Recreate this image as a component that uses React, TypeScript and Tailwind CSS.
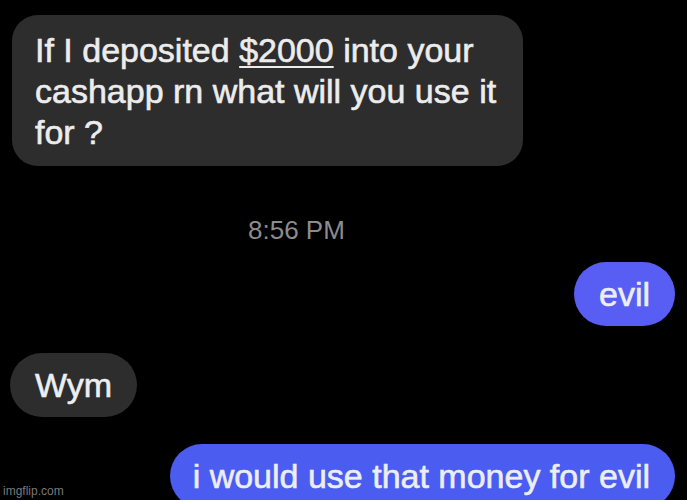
const font = "font-['Liberation_Sans',Arial,sans-serif]";
// the screenshot text reads a touch heavier than Liberation's regular cut
const heavy = "[-webkit-text-stroke:0.6px_currentColor]";

function Bubble({
  children,
  tone,
  className = "",
}: {
  children: React.ReactNode;
  tone: "gray" | "blue" | "blueDeep";
  className?: string;
}) {
  const bg =
    tone === "gray" ? "bg-[#2d2d2e]" : tone === "blue" ? "bg-[#585ef4]" : "bg-[#4b5cf1]";
  return (
    <div
      className={`${bg} ${heavy} h-[64px] shrink-0 rounded-full px-[25px] pt-[12px] pb-[11px] text-[34px] leading-[41px] text-[#eceef2] whitespace-nowrap ${className}`}
    >
      {children}
    </div>
  );
}

export default function App() {
  return (
    <div className={`relative flex h-[500px] w-[687px] flex-col overflow-hidden bg-black ${font}`}>
      <div
        className={`mt-[15px] ml-[12px] w-[511px] rounded-[26px] bg-[#2d2d2e] pt-[15px] pb-[13px] pl-[23px] pr-[12px] text-[34px] leading-[41px] text-[#ececec] ${heavy}`}
      >
        If I deposited{" "}
        <span className="underline decoration-[2px] underline-offset-[4px]">$2000</span> into your
        <br />
        cashapp rn what will you use it
        <br />
        for ?
      </div>

      <div className="mt-[49px] pl-[248px] text-[26px] leading-[30px] text-[#8c8c8c]">8:56 PM</div>

      <Bubble tone="blue" className="mt-[17px] mr-[12px] self-end">
        evil
      </Bubble>

      <Bubble tone="gray" className="mt-[27px] ml-[10px] self-start">
        Wym
      </Bubble>

      <Bubble tone="blueDeep" className="mt-[27px] mr-[12px] self-end pl-[23px]">
        i would use that money for evil
      </Bubble>

      <span className="absolute bottom-[2px] left-[3px] text-[12px] leading-[14px] text-[#9a9a9a]/80">
        imgflip.com
      </span>
    </div>
  );
}
